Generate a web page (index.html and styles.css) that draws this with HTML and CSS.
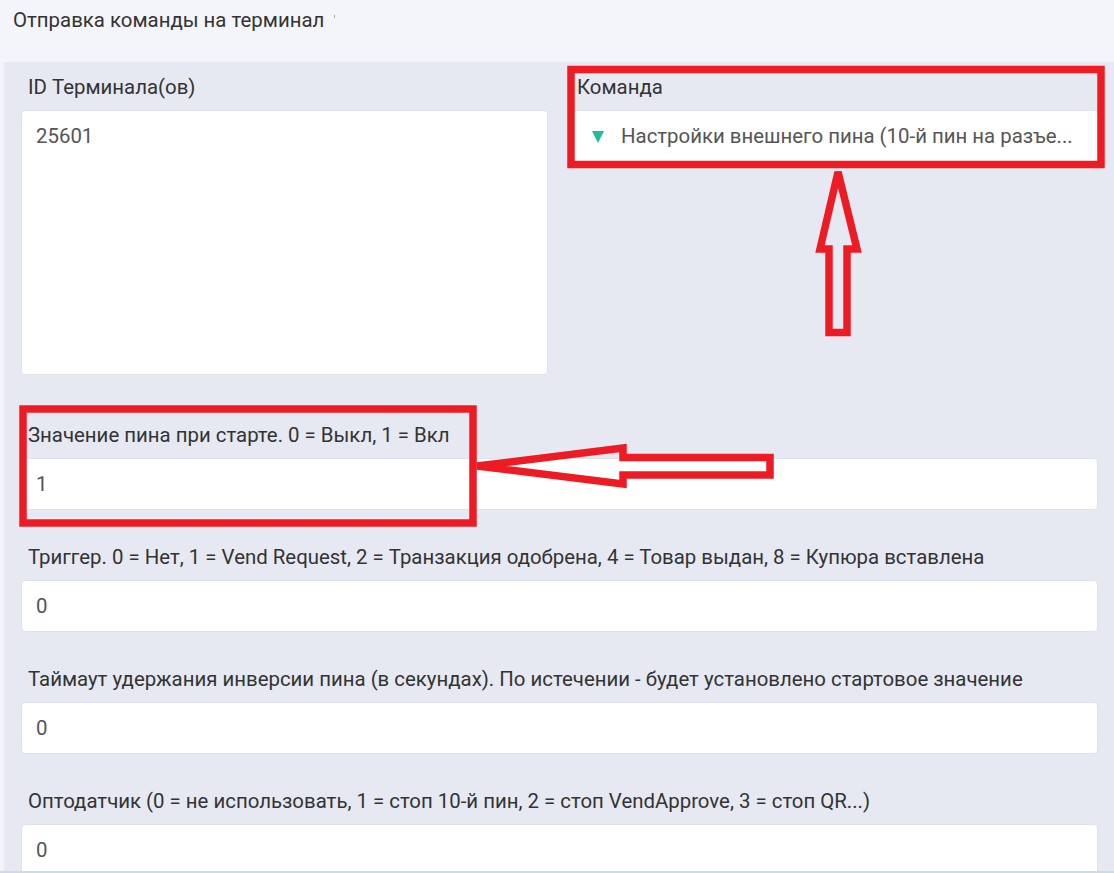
FILE: index.html
```
<!DOCTYPE html>
<html lang="ru">

<head>
  <meta charset="UTF-8">
  <meta name="viewport" content="width=device-width, initial-scale=1.0">
  <title>Отправка команды на терминал</title>
  <link rel="stylesheet" href="styles.css">
</head>

<body>
  <!-- заголовок -->
  <div class="page-title">Отправка команды на терминал<span class="tick"></span></div>

  <div class="panel">
    <div class="row-top">
      <div class="field">
        <label class="label">ID Терминала(ов)</label>
        <textarea class="box area">25601</textarea>
      </div>
      <div class="field">
        <label class="label label-cmd">Команда</label>
        <div class="box select">
          <span class="caret"></span>
          <span class="select-text">Настройки внешнего пина (10-й пин на разъе...</span>
        </div>
      </div>
    </div>

    <div class="field wide">
      <label class="label">Значение пина при старте. 0 = Выкл, 1 = Вкл</label>
      <input class="box input" type="text" value="1">
    </div>
    <div class="field wide">
      <label class="label">Триггер. 0 = Нет, 1 = Vend Request, 2 = Транзакция одобрена, 4 = Товар выдан, 8 = Купюра вставлена</label>
      <input class="box input" type="text" value="0">
    </div>
    <div class="field wide">
      <label class="label">Таймаут удержания инверсии пина (в секундах). По истечении - будет установлено стартовое значение</label>
      <input class="box input" type="text" value="0">
    </div>
    <div class="field wide">
      <label class="label">Оптодатчик (0 = не использовать, 1 = стоп 10-й пин, 2 = стоп VendApprove, 3 = стоп QR...)</label>
      <input class="box input" type="text" value="0">
    </div>
  </div>

  <!-- пометки поверх скриншота -->
  <svg class="marks" width="1114" height="873" viewBox="0 0 1114 873">
    <g fill="none" stroke="#ed1c24" stroke-width="7.5" stroke-linejoin="miter">
      <rect x="571" y="69.5" width="530" height="95"></rect>
      <rect x="23" y="409" width="450" height="114"></rect>
      <polygon points="838,172 857,249 847,249 847,332.5 829,332.5 829,249 820,249"></polygon>
      <polygon points="477,466 623,448 623,457.5 770,457.5 770,475 623,475 623,484"></polygon>
    </g>
  </svg>

  <div class="bottom-line"></div>
</body>

</html>
```
FILE: styles.css
```
body {
  margin: 0;
  background-color: #f4f5fa;
  font-family: Roboto, 'Noto Sans', sans-serif;
  font-size: 20.4px;
  color: #333;
  width: 1114px;
  height: 873px;
  overflow: hidden;
}

.page-title {
  height: 62px;
  padding: 8px 0 0 13px;
  box-sizing: border-box;
  line-height: 24px;
  color: #333;
}

.page-title .tick {
  display: inline-block;
  width: 1px;
  height: 3px;
  margin-left: 10px;
  vertical-align: 9px;
  background-color: #aaa;
}

.panel {
  margin-left: 4px;
  padding: 13px 16px 0 17px;
  background-color: #e6e9f1;
  height: 811px;
  box-sizing: border-box;
}

.row-top {
  display: grid;
  grid-template-columns: 527px 526px;
  column-gap: 24px;
  margin-bottom: 48px;
}

.field {
  display: flex;
  flex-direction: column;
}

.field.wide {
  margin-bottom: 35px;
}

.label {
  line-height: 24px;
  margin-bottom: 11px;
  padding-left: 7px;
  color: #333;
  white-space: nowrap;
}

.label-cmd {
  padding-left: 5px;
}

.box {
  background-color: #fff;
  border: 1px solid #dfe2ea;
  border-radius: 4px;
  box-sizing: border-box;
  font-family: inherit;
  font-size: 20.4px;
  color: #555;
  outline: none;
}

.area {
  height: 265px;
  padding: 13px 14px;
  line-height: 24px;
  resize: none;
}

.input {
  height: 52px;
  padding: 0 14px;
  width: 100%;
}

.select {
  height: 52px;
  display: flex;
  align-items: center;
  padding-left: 19px;
}

.caret {
  width: 0;
  height: 0;
  border-left: 6.5px solid transparent;
  border-right: 6.5px solid transparent;
  border-top: 12px solid #1fbf98;
  margin-right: 17px;
  margin-top: 1px;
}

.select-text {
  color: #555;
}

.marks {
  position: absolute;
  left: 0;
  top: 0;
  pointer-events: none;
}

.bottom-line {
  position: fixed;
  left: 0;
  right: 0;
  bottom: 0;
  height: 2px;
  background-color: #c6dee6;
}
```
